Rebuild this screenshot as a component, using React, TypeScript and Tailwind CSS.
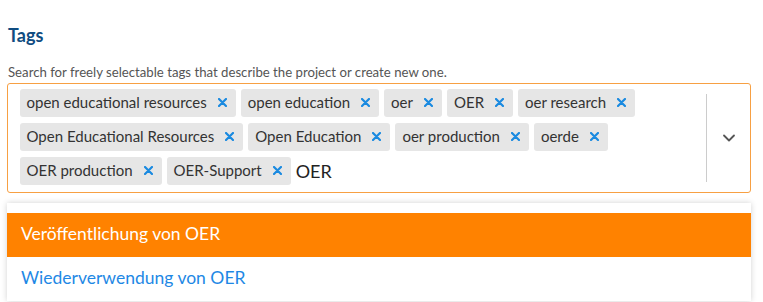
import { ChevronDown } from "lucide-react";

const tags = [
  "open educational resources",
  "open education",
  "oer",
  "OER",
  "oer research",
  "Open Educational Resources",
  "Open Education",
  "oer production",
  "oerde",
  "OER production",
  "OER-Support",
];

function Tag({ label }: { label: string }) {
  return (
    <span className="flex h-[28px] items-center rounded-[3px] bg-[#e6e6e6] pl-[7px] pr-[9px] text-[15px] text-[#333]">
      {label}
      {/* remove icon */}
      <svg width="9" height="9" viewBox="0 0 9 9" className="ml-[11px]">
        <path d="M1 1 8 8M8 1 1 8" stroke="#1a8ae0" strokeWidth="2.2" strokeLinecap="round" />
      </svg>
    </span>
  );
}

export default function App() {
  return (
    <div className="min-h-screen bg-white px-[7px] pt-[23px] font-['Lato',sans-serif]">
      <h2 className="h-[24px] pl-px text-[18px] font-bold leading-[24px] text-[#0f4c81]">Tags</h2>
      <p className="mt-[15px] h-[20px] pl-px text-[13.2px] leading-[20px] text-[#555]">
        Search for freely selectable tags that describe the project or create new one.
      </p>

      <div className="mt-px flex w-[744px] rounded-[3px] border-[1.5px] border-[#f7a043]">
        <div className="flex flex-1 flex-wrap items-center gap-x-[5px] gap-y-[6px] pt-[4.5px] pb-[7px] pl-[11.5px]">
          {tags.map((t) => (
            <Tag key={t} label={t} />
          ))}
          <span className="text-[18px] leading-[28px] text-[#222]">OER</span>
        </div>
        <div className="flex w-[44px] items-center py-[9.5px]">
          <div className="h-full w-px bg-[#ccc]" />
          <div className="flex flex-1 items-center justify-center">
            <ChevronDown size={20} strokeWidth={2.2} className="text-[#555]" />
          </div>
        </div>
      </div>

      <div className="mt-[10px] w-[744px] bg-white pt-[10px] shadow-[0_0_6px_rgba(0,0,0,0.18)]">
        <div className="flex h-[44px] items-center bg-[#ff8200] px-[14px] text-[17.5px] text-white">
          Veröffentlichung von OER
        </div>
        <div className="flex h-[44px] items-center px-[14px] text-[17.5px] text-[#1e88e5]">
          Wiederverwendung von OER
        </div>
      </div>
    </div>
  );
}
